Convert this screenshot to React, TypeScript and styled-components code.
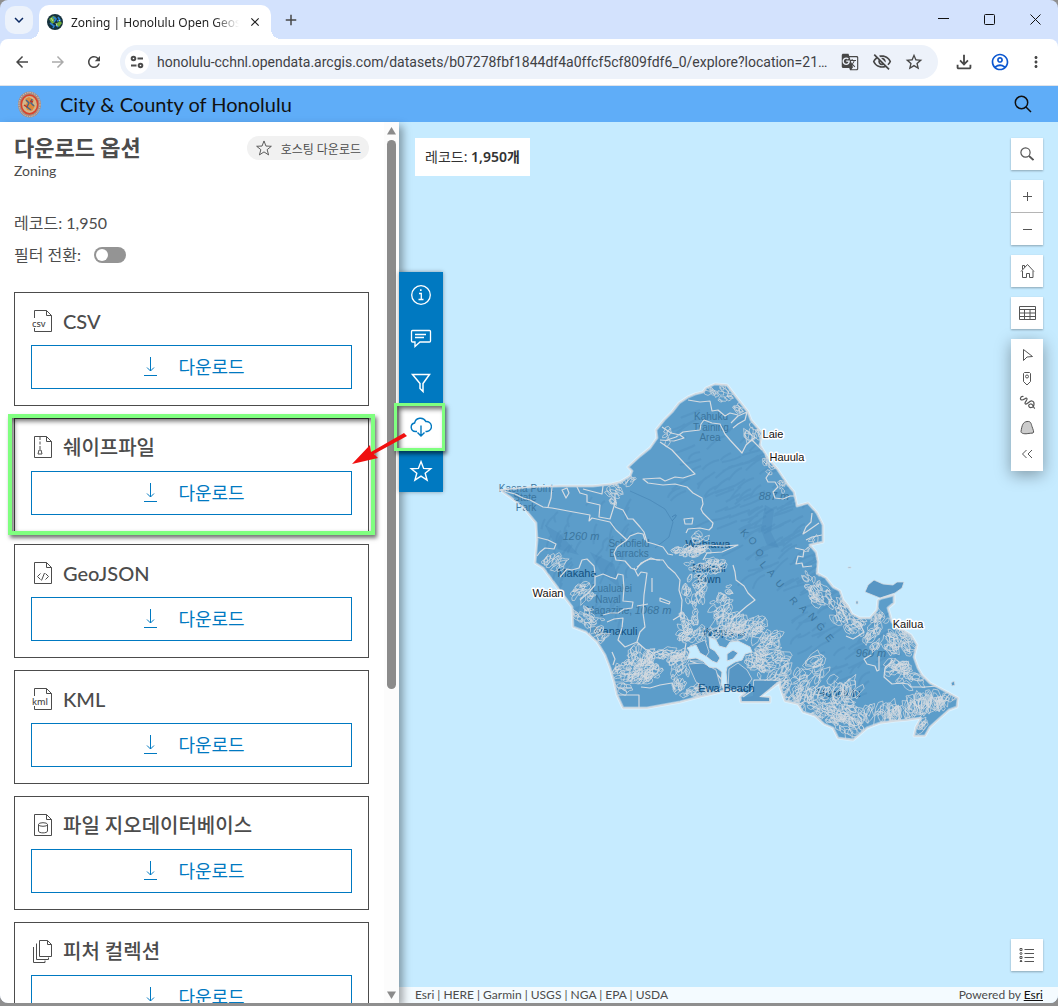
import React from "react";
import styled, { createGlobalStyle, css } from "styled-components";
import {
  MdAdd,
  MdArrowBack,
  MdArrowForward,
  MdClose,
  MdGTranslate,
  MdKeyboardArrowDown,
  MdMoreVert,
  MdOutlineAccountCircle,
  MdOutlineFileDownload,
  MdOutlineVisibilityOff,
  MdRefresh,
  MdStarBorder,
} from "react-icons/md";

const uiFont = `"Noto Sans", "Noto Sans CJK KR", sans-serif`;
const siteFont = `Lato, "Noto Sans CJK KR", sans-serif`;
const blue = "#0079c1";
const ink = "#4c4c4c";

const GlobalStyle = createGlobalStyle`
  *, *::before, *::after { box-sizing: border-box; }
  body { margin: 0; background: #8f8f8f; font-family: ${siteFont}; color: ${ink}; }
  button, input { font: inherit; color: inherit; margin: 0; }
  button { border: 0; padding: 0; background: none; cursor: pointer; }
  h1, h2, h3, p, ul { margin: 0; padding: 0; font-weight: inherit; }
`;

const Desktop = styled.div`
  height: 100vh;
  padding-bottom: 3px;
`;

const Window = styled.div`
  height: 100%;
  display: flex;
  flex-direction: column;
  overflow: hidden;
  border-radius: 8px;
  background: #d3e2fd;
`;

/* ---------- browser chrome ---------- */

const TabStrip = styled.div`
  display: flex;
  align-items: center;
  height: 39px;
  flex: none;
  padding-left: 5px;
  font-family: ${uiFont};
  color: #1f1f1f;
`;

const TabMenu = styled.button`
  display: grid;
  place-items: center;
  width: 28px;
  height: 28px;
  border-radius: 10px;
  background: #ecf2fb;
  color: #0b2a63;
`;

const Tab = styled.div`
  position: relative;
  align-self: flex-end;
  display: flex;
  align-items: center;
  gap: 8px;
  width: 232px;
  height: 34px;
  margin-left: 6px;
  padding: 0 8px;
  border-radius: 10px 10px 0 0;
  background: #fff;
  font-size: 12px;

  &::before,
  &::after {
    content: "";
    position: absolute;
    bottom: 0;
    width: 10px;
    height: 10px;
  }
  &::before {
    right: 100%;
    background: radial-gradient(circle at 0 0, transparent 10px, #fff 10px);
  }
  &::after {
    left: 100%;
    background: radial-gradient(circle at 100% 0, transparent 10px, #fff 10px);
  }
`;

const TabTitle = styled.span`
  flex: 1;
  overflow: hidden;
  white-space: nowrap;
  mask-image: linear-gradient(90deg, #000 85%, transparent);
`;

const PlainButton = styled.button<{ $size: number; $color?: string }>`
  display: grid;
  place-items: center;
  flex: none;
  width: ${(p) => p.$size}px;
  height: ${(p) => p.$size}px;
  color: ${(p) => p.$color ?? "#474747"};
`;

const NewTab = styled(PlainButton)`
  margin-left: 6px;
`;

const WindowControls = styled.div`
  display: flex;
  margin-left: auto;
`;

const WindowButton = styled.button`
  display: grid;
  place-items: center;
  width: 46px;
  height: 34px;
  color: #111;
`;

const Toolbar = styled.div`
  display: flex;
  align-items: center;
  height: 47px;
  flex: none;
  padding: 0 4px;
  border-bottom: 1px solid #dfe3ea;
  border-radius: 8px 8px 0 0;
  background: #fff;
`;

const AddressBar = styled.label`
  display: flex;
  align-items: center;
  flex: 1;
  min-width: 0;
  height: 34px;
  margin: 0 8px;
  padding: 0 8px 0 5px;
  border-radius: 17px;
  background: #edf2fa;
`;

const SiteInfo = styled.span`
  display: grid;
  place-items: center;
  flex: none;
  width: 24px;
  height: 24px;
  border-radius: 50%;
  background: #fff;
`;

const AddressInput = styled.input`
  flex: 1;
  min-width: 0;
  padding: 0 4px 0 8px;
  border: 0;
  outline: 0;
  background: none;
  font-family: Roboto, "Noto Sans CJK KR", sans-serif;
  font-size: 14px;
  color: #3f4145;
  text-overflow: ellipsis;
`;

/* ---------- site ---------- */

const SiteHeader = styled.header`
  display: flex;
  align-items: center;
  gap: 18px;
  height: 36px;
  flex: none;
  padding: 0 20px 0 17px;
  background: #5fadf8;
  color: #111;
`;

const SiteTitle = styled.h1`
  flex: 1;
  font-size: 20px;
  line-height: 24px;
`;

const Main = styled.main`
  display: flex;
  flex: 1;
  min-height: 0;
`;

const Panel = styled.aside`
  position: relative;
  z-index: 2;
  display: flex;
  flex: none;
  width: 399px;
  background: #fff;
  box-shadow: 4px 4px 8px rgba(0, 0, 0, 0.35);
`;

const PanelBody = styled.div`
  flex: 1;
  min-width: 0;
  overflow: hidden;
  padding: 12px 15px 0 14px;
`;

const ScrollTrack = styled.div`
  display: flex;
  flex-direction: column;
  align-items: center;
  width: 15px;
  padding: 5px 0 4px;
  background: #fcfcfc;
`;

const ScrollThumb = styled.div`
  width: 9px;
  height: 63%;
  margin-top: 5px;
  margin-bottom: auto;
  border-radius: 5px;
  background: #8b8b8b;
`;

const PanelHead = styled.div`
  display: flex;
  justify-content: space-between;
  align-items: center;
  height: 28px;
`;

const PanelTitle = styled.h2`
  font-size: 22px;
  font-weight: 700;
  line-height: 28px;
`;

const Pill = styled.span`
  display: flex;
  align-items: center;
  gap: 8px;
  height: 24px;
  padding: 0 8px;
  border-radius: 12px;
  background: #f1f1f1;
  font-size: 12px;
`;

const Subtitle = styled.p`
  font-size: 14px;
  line-height: 18px;
`;

const Facts = styled.div`
  display: flex;
  flex-direction: column;
  gap: 8px;
  margin: 31px 0 25px;
  font-size: 16px;
  line-height: 24px;
`;

const ToggleRow = styled.label`
  display: flex;
  align-items: center;
  gap: 13px;
`;

const Toggle = styled.input`
  appearance: none;
  display: flex;
  align-items: center;
  width: 32px;
  height: 16px;
  padding: 0 2px;
  border-radius: 8px;
  background: #949494;
  &::before {
    content: "";
    width: 12px;
    height: 12px;
    border-radius: 50%;
    background: #fff;
  }
  &:checked { justify-content: flex-end; background: ${blue}; }
`;

const CardList = styled.ul`
  display: flex;
  flex-direction: column;
  gap: 12px;
  list-style: none;
`;

const Card = styled.li<{ $marked?: boolean }>`
  position: relative;
  display: flex;
  flex-direction: column;
  gap: 12px;
  padding: 16px;
  border: 1px solid ${ink};
  ${(p) =>
    p.$marked &&
    css`
      &::after {
        content: "";
        position: absolute;
        inset: -5px -7px -4px;
        border: 4px solid #80ff80;
        box-shadow: 2px 3px 4px rgba(0, 0, 0, 0.55), inset 2px 3px 5px rgba(0, 0, 0, 0.6);
        pointer-events: none;
      }
    `}
`;

const CardTitle = styled.h3`
  display: flex;
  align-items: center;
  gap: 8px;
  font-size: 20px;
  font-weight: 500;
  line-height: 24px;
`;

const DownloadButton = styled.button`
  display: flex;
  align-items: center;
  justify-content: center;
  gap: 20px;
  height: 44px;
  padding: 0 0 3px 4px;
  border: 1px solid ${blue};
  background: #fff;
  font-size: 18px;
  color: ${blue};
`;

const MapView = styled.section`
  position: relative;
  display: grid;
  place-items: center;
  flex: 1;
  min-width: 0;
  background: #c6ebff;
`;

const ActionBar = styled.nav`
  position: absolute;
  z-index: 3;
  top: 150px;
  left: 0;
  display: flex;
  flex-direction: column;
  width: 44px;
  box-shadow: 0 0 4px rgba(0, 0, 0, 0.35);
`;

const Action = styled.button<{ $active?: boolean }>`
  position: relative;
  display: grid;
  place-items: center;
  height: 44px;
  padding-top: 2px;
  background: ${(p) => (p.$active ? "#fff" : blue)};
  color: ${(p) => (p.$active ? blue : "#fff")};
  ${(p) =>
    p.$active &&
    css`
      z-index: 1;
      &::after {
        content: "";
        position: absolute;
        inset: -1px -2px -3px -5px;
        border: 3px solid #80ff80;
        box-shadow: 2px 3px 4px rgba(0, 0, 0, 0.55), inset 3px 3px 5px rgba(0, 0, 0, 0.6);
      }
    `}
`;

const Pointer = styled.svg`
  position: absolute;
  z-index: 2;
  top: 154px;
  left: -49px;
  pointer-events: none;
`;

const RecordChip = styled.p`
  position: absolute;
  top: 16px;
  left: 16px;
  padding: 0 10px;
  background: #fff;
  font-family: ${uiFont};
  font-size: 14px;
  line-height: 38px;
  color: #323232;
  b { font-weight: 600; }
`;

const MapTools = styled.div`
  position: absolute;
  top: 16px;
  right: 15px;
  bottom: 32px;
  display: flex;
  flex-direction: column;
  gap: 10px;
  width: 32px;
`;

const ToolGroup = styled.div<{ $raised?: boolean }>`
  display: flex;
  flex-direction: column;
  gap: 1px;
  background: #b5b5b5;
  box-shadow: ${(p) => (p.$raised ? "0 4px 16px rgba(0,0,0,.35)" : "0 1px 2px rgba(0,0,0,.3)")};
  &:last-child { margin-top: auto; }
`;

const Tool = styled.button`
  display: grid;
  place-items: center;
  height: 32px;
  background: #fff;
  color: #555;
`;

const SketchTools = styled(ToolGroup)`
  gap: 0;
  padding: 4px 0 2px;
  background: #fff;
  ${Tool} { height: 24px; }
  ${Tool}:last-child { height: 30px; }
`;

const Attribution = styled.footer`
  position: absolute;
  right: 0;
  bottom: 0;
  left: 0;
  display: flex;
  justify-content: space-between;
  padding: 0 15px 0 16px;
  background: rgba(255, 255, 255, 0.8);
  font-size: 12px;
  line-height: 16px;
  a { color: #111; }
`;

/* ---------- icons ---------- */

type IconProps = { w: number; h?: number; box?: string; sw?: number; children: React.ReactNode };
const Line = ({ w, h = w, box, sw = 1, children }: IconProps) => (
  <svg width={w} height={h} viewBox={box ?? `0 0 ${w} ${h}`} fill="none" stroke="currentColor" strokeWidth={sw} aria-hidden="true">
    {children}
  </svg>
);

const starPath = "M12 2.6 14.6 9.4 21.8 9.7 16.2 14.2 18.1 21.2 12 17.2 5.9 21.2 7.8 14.2 2.2 9.7 9.4 9.4Z";

const Star = ({ size, sw }: { size: number; sw: number }) => (
  <Line w={size} box="0 0 24 24" sw={sw}><path d={starPath} /></Line>
);

const DownArrow = () => (
  <Line w={16} h={20}><path d="M8.5 1v14M5 11.500l3.500 3.500 3.500-3.500M2 19.500h13" /></Line>
);

const Globe = () => (
  <svg width="16" height="16" viewBox="0 0 16 16" aria-hidden="true">
    <circle cx="8" cy="8" r="8" fill="#16323d" />
    <path d="M2 5l4-3 3 1-2 3 1 2-3 2zM10 9l3-2 2 2-3 4-2-1z" fill="#6fae3c" />
    <path d="M6 3l3 2-2 3M3 9l4 3-1 2M11 3l2 3-3 1M9 11l2 2" stroke="#2b7fd0" strokeWidth="1.6" fill="none" />
    <path d="M4 4l2 3M9 9l1 3M12 6l1 1" stroke="#c3dc9a" strokeWidth="1" />
  </svg>
);

const Seal = () => (
  <svg width="25" height="27" viewBox="0 0 25 27" aria-hidden="true">
    <ellipse cx="12.500" cy="13.500" rx="11.500" ry="13" fill="#a58d84" />
    <ellipse cx="12.500" cy="13.500" rx="10.500" ry="12" fill="none" stroke="#d9c9bd" strokeDasharray="1.200 1.200" />
    <ellipse cx="12.500" cy="13.500" rx="8.200" ry="9.400" fill="#d3b68a" stroke="#d8432b" strokeWidth="1.600" />
    <path d="M8 8l4-2 5 3-2 3 3 3-3 5-5-1-2-5 2-2z" fill="#dd8a3a" />
    <path d="M9 9l3 3-2 4 4 3M15 8l-1 4 3 3" stroke="#46658c" strokeWidth="1.400" fill="none" />
    <path d="M7 14l3 2M13 10l3 1" stroke="#b8322a" strokeWidth="1.500" />
  </svg>
);

type Format = "csv" | "zip" | "code" | "kml" | "db" | "stack";

const FileIcon = ({ kind }: { kind: Format }) => {
  if (kind === "stack")
    return (
      <Line w={24} box="-1 0 24 24">
        <path d="M7.500 1.500h8l4 4v12h-12zM15.500 1.500v4h4M4.500 4.500v16h12v-2M1.500 8v15.500h11.500v-2" />
      </Line>
    );
  const labelled = kind === "csv" || kind === "kml";
  return (
    <Line w={24} box="-1 0 24 24">
      <path d={labelled ? "M2.500 9V1.500h12l5 5v16h-17V19M14.500 1.500v5h5" : "M2.500 1.500h12l5 5v16h-17zM14.500 1.500v5h5"} />
      {labelled && (
        <text x="0" y="18" fill="currentColor" stroke="none" fontFamily="Noto Sans" fontSize="9" fontWeight="500">{kind}</text>
      )}
      {kind === "zip" && <path d="M8 2v13" strokeDasharray="3 1.500" />}
      {kind === "zip" && <path d="M7 15h2l1 4H6z" />}
      {kind === "code" && <path d="M8.500 12.500 5.500 15.500l3 3M13.500 12.500l3 3-3 3M12.500 12l-3 7.500" />}
      {kind === "db" && <path d="M6.500 11.500v6.500c0 2.500 9 2.500 9 0v-6.500" />}
      {kind === "db" && <ellipse cx="11" cy="11.500" rx="4.500" ry="1.800" />}
    </Line>
  );
};

/* ---------- Oahu ---------- */

type Pt = [number, number];

const coast =
  "M500 490 530 487 560 486 593 486 612 484 620 482 630 476 632 471 628 467 640 456 650 448 657 438 656 430 664 420 672 412 679 403 688 397 695 394 703 392 706 388 715 384 727 385 737 398 748 412 751 420 757 427 762 433 760 445 768 458 778 470 788 485 794 492 797 506 808 503 817 513 823 525 823 542 810 545 816 552 818 562 817 573 826 578 833 587 840 591 843 600 848 606 852 614 860 618 870 618 877 610 878 600 882 598 894 595 894 603 888 608 892 622 903 630 911 635 917 645 914 657 918 668 922 675 930 683 947 692 958 698 957 707 949 710 940 718 930 727 925 736 914 736 916 727 921 718 907 720 895 721 880 723 867 728 853 740 838 738 833 728 824 724 815 716 803 712 798 704 785 701 780 687 780 682 760 697 770 697 770 702 741 702 740 697 745 693 727 690 712 694 695 698 680 702 647 708 623 708 617 695 614 682 610 668 605 655 597 642 586 632 573 627 572 607 557 587 543 568 535 563 537 540 536 523 523 507 510 497Z";

const harbor =
  "M709 637 716 640 719 646 726 648 730 642 738 641 750 647 752 652 745 654 742 660 735 662 727 667 726 672 727 684 724 690 721 684 722 672 717 668 709 667 703 661 696 658 687 659 690 652 687 648 696 645 700 653 707 657 712 661 717 663 720 658 715 651 710 648Z";

const boundaries = [
  "M660 442 672 450 684 463 695 474 683 478 675 477 665 481 660 478 643 479 648 483 663 485 675 484 687 487 693 493 702 498 703 504 701 509 703 513 713 523 712 527 709 530 700 528 688 529 686 533",
  "M500 490 515 494 523 498 530 500 543 507 552 508 568 511 590 515 589 521 592 518 610 522 616 530 627 540",
  "M552 487 551 498 548 507M562 490 567 488 569 493 566 498Z",
  "M577 487 580 493 587 495 587 502 600 505 599 517 610 519 615 503 615 493M583 489 602 494 603 486",
  "M615 507 623 510 628 519 633 519 640 527 644 532 647 542 654 544 663 547 668 554 673 555",
  "M627 540 617 547 614 553 616 560 625 561 631 568 636 570 641 563 650 559 660 560",
  "M627 540 630 536 638 533 643 534 645 540",
  "M662 427 671 433 680 435 684 438 674 441 660 440M667 440 676 437 683 432 691 431 700 430 701 424 704 420 712 423 720 424 725 434 730 440 742 453 746 445 755 437",
  "M688 400 700 402 710 401 712 411 718 410 725 416 730 413 738 415M731 423 738 416 747 412 745 420 738 424 733 428",
  "M637 567 645 561 651 558 657 560 663 560 668 567 675 573 680 580 679 590 682 600 681 615 673 620M663 650 653 653 645 649 637 642 640 632 645 627 643 613 644 595 647 573 641 572 638 576 634 568",
  "M595 577 603 574 610 577 616 579 618 574 623 575 624 588 623 601 633 602 632 608 624 609 618 613 610 613 603 615",
  "M607 622 614 619 623 618 622 628 618 640 625 647 637 642M595 573 594 566 587 559 582 560 579 568 572 570 567 569 560 577",
  "M595 575 595 585 589 592 580 600M536 537 548 540 556 544 554 549 545 548 540 552 537 556",
  "M660 598 670 602 669 604 660 601ZM684 519 693 518 692 524 685 524Z",
  "M733 565 735 572 736 580 744 586 748 593 755 600 747 606 740 612 731 620",
  "M618 695 639 695 639 708M641 687 650 688 660 685 672 683 675 690",
  "M690 661 704 666 716 673 722 680M871 655 864 659 867 664 875 666 877 671 879 670 879 656",
  "M893 660 885 668 884 677 892 684 901 683 908 684 911 687 925 687 938 686",
  "M770 472 766 478 768 482 775 482 778 487 773 492 775 498 783 499 790 496 794 496",
  "M812 513 811 522 806 527 803 534 809 530 819 523M806 540 812 537 822 535",
  "M795 548 804 550 803 557 798 556 796 564 802 563 803 567 812 566",
  "M743 697 753 690 754 680 780 680M612 652 615 659 613 665M671 652 684 655 686 643M637 606 648 604",
  "M846 636 853 639 858 636 864 632 860 624M840 605 848 623",
  "M703 560 707 553 722 552 738 545 724 546 706 545 688 551M757 429 765 445M752 440 762 450",
  "M652 592 652 578",
];

type Cluster = { c: Pt; r: Pt; n: number; s: number; tilt: number };
const clusters: Cluster[] = [
  { c: [615, 492], r: [9, 12], n: 16, s: 3, tilt: 60 },
  { c: [627, 477], r: [8, 6], n: 10, s: 3, tilt: -40 },
  { c: [667, 435], r: [5, 8], n: 4, s: 3, tilt: -60 },
  { c: [719, 394], r: [13, 8], n: 14, s: 3, tilt: 30 },
  { c: [737, 406], r: [5, 6], n: 5, s: 3, tilt: 50 },
  { c: [754, 434], r: [7, 10], n: 9, s: 4, tilt: 60 },
  { c: [768, 464], r: [5, 9], n: 9, s: 3, tilt: 55 },
  { c: [785, 487], r: [4, 8], n: 4, s: 3, tilt: 60 },
  { c: [812, 545], r: [7, 7], n: 4, s: 3, tilt: -60 },
  { c: [692, 550], r: [18, 5], n: 34, s: 3, tilt: -20 },
  { c: [702, 538], r: [12, 4], n: 5, s: 4, tilt: -15 },
  { c: [705, 566], r: [20, 7], n: 26, s: 3, tilt: -25 },
  { c: [697, 588], r: [13, 17], n: 34, s: 3, tilt: -65 },
  { c: [688, 617], r: [9, 18], n: 24, s: 3, tilt: 60 },
  { c: [720, 607], r: [10, 12], n: 14, s: 4, tilt: -55 },
  { c: [730, 590], r: [4, 4], n: 4, s: 3, tilt: 0 },
  { c: [557, 563], r: [15, 7], n: 13, s: 4, tilt: -50 },
  { c: [585, 592], r: [12, 8], n: 17, s: 3, tilt: -40 },
  { c: [588, 617], r: [15, 9], n: 24, s: 3, tilt: 35 },
  { c: [600, 632], r: [8, 7], n: 9, s: 4, tilt: -35 },
  { c: [637, 671], r: [24, 11], n: 82, s: 3, tilt: -40 },
  { c: [640, 655], r: [14, 8], n: 20, s: 4, tilt: -80 },
  { c: [622, 688], r: [7, 4], n: 5, s: 4, tilt: 30 },
  { c: [672, 655], r: [16, 7], n: 18, s: 4, tilt: -20 },
  { c: [680, 674], r: [8, 24], n: 38, s: 3, tilt: -70 },
  { c: [693, 691], r: [20, 6], n: 22, s: 3, tilt: -20 },
  { c: [698, 635], r: [23, 7], n: 32, s: 3, tilt: -35 },
  { c: [728, 622], r: [15, 12], n: 24, s: 4, tilt: -55 },
  { c: [748, 628], r: [18, 12], n: 28, s: 5, tilt: -25 },
  { c: [764, 640], r: [15, 11], n: 18, s: 5, tilt: -30 },
  { c: [771, 657], r: [19, 11], n: 26, s: 5, tilt: -15 },
  { c: [757, 664], r: [9, 14], n: 14, s: 4, tilt: 60 },
  { c: [788, 680], r: [20, 13], n: 30, s: 5, tilt: -40 },
  { c: [810, 660], r: [12, 5], n: 6, s: 6, tilt: -35 },
  { c: [799, 700], r: [18, 10], n: 30, s: 4, tilt: -50 },
  { c: [822, 680], r: [12, 14], n: 14, s: 5, tilt: -50 },
  { c: [832, 709], r: [23, 13], n: 50, s: 4, tilt: 30 },
  { c: [848, 694], r: [12, 14], n: 14, s: 6, tilt: -65 },
  { c: [852, 722], r: [16, 13], n: 28, s: 4, tilt: 50 },
  { c: [880, 713], r: [18, 9], n: 18, s: 6, tilt: -80 },
  { c: [905, 712], r: [16, 8], n: 14, s: 6, tilt: -80 },
  { c: [925, 704], r: [14, 9], n: 22, s: 6, tilt: -75 },
  { c: [944, 701], r: [12, 7], n: 16, s: 4, tilt: -70 },
  { c: [920, 724], r: [5, 8], n: 7, s: 4, tilt: -50 },
  { c: [812, 579], r: [8, 12], n: 14, s: 3, tilt: 60 },
  { c: [822, 595], r: [11, 9], n: 18, s: 4, tilt: 50 },
  { c: [840, 610], r: [10, 12], n: 17, s: 4, tilt: 55 },
  { c: [855, 626], r: [11, 10], n: 16, s: 4, tilt: 30 },
  { c: [880, 617], r: [9, 14], n: 16, s: 4, tilt: -70 },
  { c: [872, 644], r: [7, 12], n: 12, s: 4, tilt: -50 },
  { c: [899, 643], r: [14, 13], n: 32, s: 4, tilt: 50 },
  { c: [899, 668], r: [14, 10], n: 25, s: 4, tilt: -30 },
  { c: [912, 681], r: [14, 5], n: 8, s: 4, tilt: 20 },
];

const makeRandom = (seed: number) => () => {
  seed = (seed * 1664525 + 1013904223) % 4294967296;
  return seed / 4294967296;
};

const parcels = (() => {
  const rnd = makeRandom(41);
  return clusters.map(({ c, r, n, s, tilt }) => {
    let d = "";
    for (let i = 0; i < n; i++) {
      const a = rnd() * Math.PI * 2;
      const k = Math.sqrt(rnd());
      const x = c[0] + Math.cos(a) * r[0] * k;
      const y = c[1] + Math.sin(a) * r[1] * k;
      const t = ((tilt + (rnd() - 0.5) * 70) * Math.PI) / 180;
      const scale = s * (0.6 + rnd() * 0.9);
      const steps = 8;
      for (let j = 0; j < steps; j++) {
        const b = (j / steps) * Math.PI * 2;
        const q = scale * (0.55 + rnd() * 0.75);
        const u = Math.cos(b) * q * 1.2;
        const v = Math.sin(b) * q * 0.65;
        d += `${j ? "L" : "M"}${(x + u * Math.cos(t) - v * Math.sin(t)).toFixed(1)} ${(y + u * Math.sin(t) + v * Math.cos(t)).toFixed(1)}`;
      }
      d += "Z";
    }
    return d;
  });
})();

const ridges = (() => {
  const rnd = makeRandom(7);
  let d = "";
  for (let i = 0; i < 190; i++) {
    const k = rnd();
    const x = 715 + k * 180 + (rnd() - 0.5) * 90;
    const y = 440 + k * 240 + (rnd() - 0.5) * 80;
    d += `M${x.toFixed(0)} ${y.toFixed(0)}q${-5 - rnd() * 5} ${1 + rnd() * 4} ${-10 - rnd() * 12} ${5 + rnd() * 9}`;
  }
  for (let i = 0; i < 70; i++) {
    const x = 545 + rnd() * 90;
    const y = 495 + rnd() * 140;
    d += `M${x.toFixed(0)} ${y.toFixed(0)}q${-2 - rnd() * 5} ${2 + rnd() * 4} ${-2 - rnd() * 6} ${8 + rnd() * 8}`;
  }
  return d;
})();

type Label = { x: number; y: number; t: string; tone?: "town" | "area" | "peak" | "shore"; rot?: number };
const labels: Label[] = [
  { x: 711, y: 420, t: "Kahuku", tone: "area" },
  { x: 711, y: 431, t: "Training", tone: "area" },
  { x: 710, y: 441, t: "Area", tone: "area" },
  { x: 526, y: 492, t: "Kaena Point", tone: "area" },
  { x: 525, y: 501, t: "State", tone: "area" },
  { x: 526, y: 511, t: "Park", tone: "area" },
  { x: 581, y: 540, t: "1260 m", tone: "peak" },
  { x: 629, y: 547, t: "Schofield", tone: "area" },
  { x: 629, y: 557, t: "Barracks", tone: "area" },
  { x: 612, y: 592, t: "Lualualei", tone: "area" },
  { x: 608, y: 603, t: "Naval", tone: "area" },
  { x: 609, y: 614, t: "Magazine,", tone: "area" },
  { x: 653, y: 614, t: "1068 m", tone: "peak" },
  { x: 774, y: 500, t: "887 m", tone: "peak" },
  { x: 871, y: 657, t: "960 m", tone: "peak" },
  { x: 577, y: 577, t: "Makaha", tone: "town" },
  { x: 616, y: 635, t: "Nanakuli", tone: "town" },
  { x: 708, y: 548, t: "Wahiawa", tone: "town" },
  { x: 709, y: 572, t: "Mililani", tone: "town" },
  { x: 708, y: 583, t: "Town", tone: "town" },
  { x: 724, y: 636, t: "Waipahu", tone: "town" },
  { x: 839, y: 697, t: "Honolulu", tone: "town" },
  { x: 709, y: 692, t: "Ewa", tone: "town" },
  { x: 739, y: 692, t: "Beach", tone: "town" },
  { x: 773, y: 438, t: "Laie", tone: "shore" },
  { x: 787, y: 461, t: "Hauula", tone: "shore" },
  { x: 548, y: 597, t: "Waian", tone: "shore" },
  { x: 908, y: 628, t: "Kailua", tone: "shore" },
  { x: 742, y: 535, t: "K", tone: "area", rot: 50 },
  { x: 750, y: 543, t: "O", tone: "area", rot: 50 },
  { x: 757, y: 555, t: "O", tone: "area", rot: 50 },
  { x: 761, y: 567, t: "L", tone: "area", rot: 50 },
  { x: 769, y: 575, t: "A", tone: "area", rot: 50 },
  { x: 777, y: 586, t: "U", tone: "area", rot: 50 },
  { x: 791, y: 603, t: "R", tone: "area", rot: 50 },
  { x: 801, y: 611, t: "A", tone: "area", rot: 50 },
  { x: 810, y: 619, t: "N", tone: "area", rot: 50 },
  { x: 818, y: 629, t: "G", tone: "area", rot: 50 },
  { x: 827, y: 640, t: "E", tone: "area", rot: 50 },
];

const MapLabel = styled.text<{ $tone: string }>`
  font-family: "Liberation Sans", sans-serif;
  font-size: ${(p) => (p.$tone === "area" ? 10 : 11)}px;
  font-style: ${(p) => (p.$tone === "peak" ? "italic" : "normal")};
  text-anchor: middle;
  fill: ${(p) => (p.$tone === "shore" ? "#111" : p.$tone === "town" ? "#14517f" : "#3b759e")};
  ${(p) =>
    p.$tone === "shore" &&
    css`
      stroke: #fff;
      stroke-width: 3px;
      stroke-linejoin: round;
      paint-order: stroke;
    `}
`;

const drawLabels = (shore: boolean) =>
  labels
    .filter((l) => (l.tone === "shore") === shore)
    .map((l) => (
      <MapLabel key={`${l.t}${l.x}`} x={l.x} y={l.y} $tone={l.tone ?? "area"} transform={l.rot ? `rotate(${l.rot} ${l.x} ${l.y})` : undefined}>
        {l.t}
      </MapLabel>
    ));

const Island = () => (
  <svg width="477" height="369" viewBox="490 378 477 369" role="img" aria-label="Oahu zoning map">
    <clipPath id="land"><path d={coast} /></clipPath>
    <path d={coast} fill="#5c9dca" stroke="#fff" strokeOpacity=".4" strokeWidth="3" strokeLinejoin="round" />
    <g clipPath="url(#land)">
      <path d={ridges} fill="none" stroke="#417fae" strokeOpacity=".2" strokeWidth="2" />
      <path d="M765 505l9 5-3 22 8 16-12-3-6-15zM545 525l14 8 20 22-22-6zM590 552l24 12 6 24-18-14z" fill="#3f80b2" fillOpacity=".25" />
      <path d="M630 491 650 500 665 509 673 522 669 537 655 548" fill="none" stroke="#4482b2" strokeOpacity=".6" />
      <path d="M672 517c5-4 6-2 0 4" fill="none" stroke="#4482b2" />
    </g>
    <path d="M865 592 868 585 874 580 883 584 893 585 897 582 904 582 902 588 895 593 880 598Z" fill="#5796c4" stroke="#d8dde2" strokeWidth=".8" />
    {drawLabels(false)}
    <g fill="none" stroke="#d5dbe1" strokeLinejoin="round">
      <g clipPath="url(#land)">
        {parcels.map((d, i) => <path key={i} d={d} strokeWidth=".8" strokeOpacity=".9" />)}
        {boundaries.map((d) => <path key={d} d={d} strokeWidth="1.200" />)}
      </g>
      <path d={coast} strokeWidth="1.300" />
      <path d="M690 646 705 640 709 652 703 661 690 661ZM703 663 716 670 721 688 713 692 696 682 688 664ZM729 669 738 663 747 670 752 679 745 688 728 689Z" fill="#5796c4" strokeWidth=".8" />
      <path d={harbor} fill="#c6ebff" />
      <path d="M727 654 733 650 738 653 733 659 727 661Z" fill="#5c9dca" />
      <path d="M951 683l3-2 1 4-3 1zM856 601h2v3h-2zM848 567h3v1h-3z" fill="#5c9dca" strokeWidth=".8" />
    </g>
    <path d="M754 681 778 681 759 697 769 698 769 701 742 701 742 698 753 696Z" fill="#5796c4" />
    <MapLabel x={709} y={692} $tone="town">Ewa</MapLabel>
    <MapLabel x={739} y={692} $tone="town">Beach</MapLabel>
    {drawLabels(true)}
  </svg>
);

/* ---------- page ---------- */

const formats: { kind: Format; name: string; marked?: boolean }[] = [
  { kind: "csv", name: "CSV" },
  { kind: "zip", name: "쉐이프파일", marked: true },
  { kind: "code", name: "GeoJSON" },
  { kind: "kml", name: "KML" },
  { kind: "db", name: "파일 지오데이터베이스" },
  { kind: "stack", name: "피처 컬렉션" },
];

const Browser = () => (
  <>
    <TabStrip>
      <TabMenu aria-label="Search tabs"><MdKeyboardArrowDown size={18} /></TabMenu>
      <Tab>
        <Globe />
        <TabTitle>Zoning | Honolulu Open Geosp</TabTitle>
        <PlainButton $size={16} $color="#1f1f1f" aria-label="Close tab"><MdClose size={14} /></PlainButton>
      </Tab>
      <NewTab $size={28} aria-label="New tab"><MdAdd size={18} /></NewTab>
      <WindowControls>
        <WindowButton aria-label="Minimize"><Line w={11}><path d="M0 4.500h11" /></Line></WindowButton>
        <WindowButton aria-label="Maximize"><Line w={11}><rect x=".5" y=".5" width="10" height="10" rx="1" /></Line></WindowButton>
        <WindowButton aria-label="Close"><Line w={11}><path d="M.5.5l10 10M10.500.5l-10 10" /></Line></WindowButton>
      </WindowControls>
    </TabStrip>
    <Toolbar>
      <PlainButton $size={36} aria-label="Back"><MdArrowBack size={18} /></PlainButton>
      <PlainButton $size={36} $color="#ababab" aria-label="Forward"><MdArrowForward size={18} /></PlainButton>
      <PlainButton $size={36} aria-label="Reload"><MdRefresh size={18} /></PlainButton>
      <AddressBar>
        <SiteInfo>
          <Line w={14} sw={2}>
            <circle cx="3.500" cy="3.500" r="1.800" /><path d="M7.500 3.500H13M1 10.500h5.500" /><circle cx="10.500" cy="10.500" r="1.800" />
          </Line>
        </SiteInfo>
        <AddressInput
          aria-label="Address"
          readOnly
          value="honolulu-cchnl.opendata.arcgis.com/datasets/b07278fbf1844df4a0ffcf5cf809fdf6_0/explore?location=21...."
        />
        <PlainButton $size={32} aria-label="Translate"><MdGTranslate size={18} /></PlainButton>
        <PlainButton $size={32} aria-label="Third-party cookies blocked"><MdOutlineVisibilityOff size={20} /></PlainButton>
        <PlainButton $size={32} aria-label="Bookmark"><MdStarBorder size={20} /></PlainButton>
      </AddressBar>
      <PlainButton $size={36} aria-label="Downloads"><MdOutlineFileDownload size={22} /></PlainButton>
      <PlainButton $size={36} $color="#0b57d0" aria-label="Profile"><MdOutlineAccountCircle size={20} /></PlainButton>
      <PlainButton $size={36} aria-label="Menu"><MdMoreVert size={18} /></PlainButton>
    </Toolbar>
  </>
);

export default function App() {
  return (
    <Desktop>
      <GlobalStyle />
      <Window>
        <Browser />
        <SiteHeader>
          <Seal />
          <SiteTitle>City &amp; County of Honolulu</SiteTitle>
          <PlainButton $size={30} $color="#111" aria-label="Search site">
            <Line w={18} sw={1.5}><circle cx="7.500" cy="7.500" r="6.200" /><path d="M12 12l5 5" /></Line>
          </PlainButton>
        </SiteHeader>
        <Main>
          <Panel>
            <PanelBody>
              <PanelHead>
                <PanelTitle>다운로드 옵션</PanelTitle>
                <Pill><Star size={18} sw={1.2} />호스팅 다운로드</Pill>
              </PanelHead>
              <Subtitle>Zoning</Subtitle>
              <Facts>
                <p>레코드: 1,950</p>
                <ToggleRow>필터 전환:<Toggle type="checkbox" role="switch" /></ToggleRow>
              </Facts>
              <CardList>
                {formats.map((f) => (
                  <Card key={f.kind} $marked={f.marked}>
                    <CardTitle><FileIcon kind={f.kind} />{f.name}</CardTitle>
                    <DownloadButton><DownArrow />다운로드</DownloadButton>
                  </Card>
                ))}
              </CardList>
            </PanelBody>
            <ScrollTrack>
              <svg width="9" height="8" aria-hidden="true"><path d="M4.500 0 9 7.500H0z" fill="#8b8b8b" /></svg>
              <ScrollThumb />
              <svg width="9" height="8" aria-hidden="true"><path d="M0 .5h9L4.500 8z" fill="#8b8b8b" /></svg>
            </ScrollTrack>
          </Panel>
          <MapView>
            <Island />
            <RecordChip>레코드: <b>1,950개</b></RecordChip>
            <MapTools>
              <ToolGroup>
                <Tool aria-label="Find address"><Line w={14} sw={1.2}><circle cx="5.500" cy="5.500" r="4.600" /><path d="M9 9l4.500 4" strokeWidth="1.800" /></Line></Tool>
              </ToolGroup>
              <ToolGroup>
                <Tool aria-label="Zoom in"><Line w={11}><path d="M5.500 1v9M1 5.500h9" /></Line></Tool>
                <Tool aria-label="Zoom out"><Line w={11}><path d="M1 5.500h9" /></Line></Tool>
              </ToolGroup>
              <ToolGroup>
                <Tool aria-label="Home"><Line w={15} h={16}><path d="M1 8.500 7.500 1.500 14 8.500M2.500 8v6.500h4V10.500h3v4h3.500V8M2.500 6.500v-4h2v2" /></Line></Tool>
              </ToolGroup>
              <ToolGroup>
                <Tool aria-label="Table"><Line w={17} h={15}><path d="M.5.5h16v13H.5zM.5 3.500h16M.5 7h16M.5 10.500h16M5.500 3.500v10M11 3.500v10" /></Line></Tool>
              </ToolGroup>
              <SketchTools $raised>
                <Tool aria-label="Select"><Line w={12} h={14}><path d="M2.500 1.500v11l3.500-3.500 5.500-.5z" /></Line></Tool>
                <Tool aria-label="Point"><Line w={10} h={16}><path d="M1.500 2.500l1-1h5l1 1v8L5 14 1.500 10.500z" /><circle cx="5" cy="5.500" r="1.500" /></Line></Tool>
                <Tool aria-label="Line"><Line w={17} h={16} sw={1.2}><path d="M4.500 1.500C1 1 .5 5 3 5s4-3 5-1.500S4.500 8 6.500 9 10 5.500 13 6s2.500 6-.5 6.500-4-3-1-3.500 2.500 4 4.500 4.500" /></Line></Tool>
                <Tool aria-label="Polygon"><Line w={15} h={15}><path d="M1 11.500C2 5 3 2 7 1.500s4 2 5 5 2.500 6 1 6.500-3 0-5 .5S1 14 1 11.500z" fill="#ccc" /></Line></Tool>
                <Tool aria-label="Collapse"><Line w={12} h={10}><path d="M5.500 1 1.500 5l4 4M11 1 7 5l4 4" /></Line></Tool>
              </SketchTools>
              <ToolGroup>
                <Tool aria-label="Legend"><Line w={16}><path d="M5.500 2.500H15M5.500 6.500H15M5.500 10.500H15M5.500 14.500H15M1 1.500h2v2H1zM1 9.500h2v2H1zM1 14.500h2L2 13z" /><circle cx="2" cy="6.500" r="1" /></Line></Tool>
              </ToolGroup>
            </MapTools>
            <Attribution>
              <span>Esri | HERE | Garmin | USGS | NGA | EPA | USDA</span>
              <span>Powered by <a href="#esri">Esri</a></span>
            </Attribution>
          </MapView>
        </Main>
      </Window>
      <Overlay />
    </Desktop>
  );
}

const OverlayFrame = styled.div`
  position: absolute;
  z-index: 4;
  top: 122px;
  left: 399px;
`;

function Overlay() {
  return (
    <OverlayFrame>
      <ActionBar aria-label="Dataset">
        <Action aria-label="Info"><Line w={22} sw={1.3}><circle cx="11" cy="11" r="9.300" /><path d="M9 9.500h2.300v6M8.500 15.500h5" /><path d="M10 6.200h1.600" strokeWidth="1.800" /></Line></Action>
        <Action aria-label="Comments"><Line w={22} sw={1.3}><path d="M1.500 3.500q0-1 1-1h17q1 0 1 1v9.500q0 1-1 1H10L5 18.500V14H2.500q-1 0-1-1zM5 6.500h11M5 9.500h9" /></Line></Action>
        <Action aria-label="Filter"><Line w={22} sw={1.5}><path d="M2.500 2.500h17L13 11.500v8l-3-3v-5z" /></Line></Action>
        <Action aria-label="Download" $active><Line w={22} sw={1.4}><path d="M7 15.500H5.500A4.300 4.300 0 0 1 4.600 7 6 6 0 0 1 15.800 5.500 4.800 4.800 0 0 1 17 15.500H15.500M11 9.500v10.500M7.500 16.500 11 20l3.500-3.500" /></Line></Action>
        <Action aria-label="Favorite"><Star size={24} sw={1.4} /></Action>
        <Pointer width="64" height="48" viewBox="0 0 64 48" aria-hidden="true">
          <path d="M2 38 20 19 21 26 54 7 57 10 24 28 28 32Z" fill="#f01010" />
        </Pointer>
      </ActionBar>
    </OverlayFrame>
  );
}
